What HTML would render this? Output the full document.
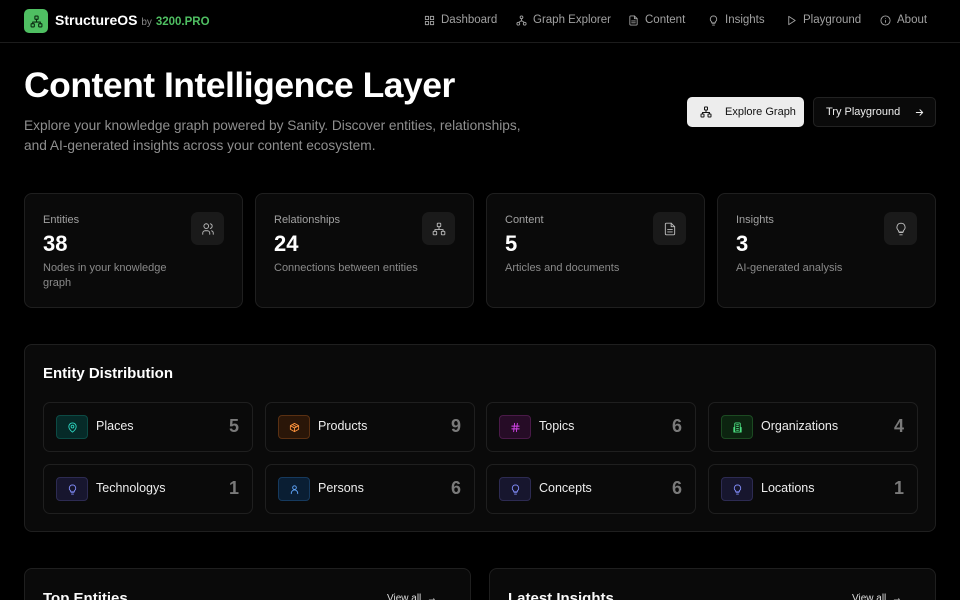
<!DOCTYPE html>
<html><head><meta charset="utf-8"><style>
*{box-sizing:border-box;margin:0;padding:0}
html,body{width:960px;height:600px;overflow:hidden}
body{background:#000;color:#fafafa;font-family:"Liberation Sans",sans-serif;position:relative}
.abs{position:absolute}
svg{fill:none;stroke:currentColor;stroke-width:2;stroke-linecap:round;stroke-linejoin:round}
.nav{position:absolute;top:0;left:0;width:960px;height:43px;border-bottom:1px solid #1c1c1c}
.nl{position:absolute;top:14px;font-size:11.5px;color:#a1a1a1;display:flex;align-items:center;gap:6px}
.nl svg{width:11px;height:11px}
.card{position:absolute;border:1px solid #1f1f1f;border-radius:8px;background:#0a0a0a}
.sc .lab{position:absolute;left:18px;top:20px;font-size:11px;color:#a1a1a1}
.sc .num{position:absolute;left:18px;top:37px;font-size:22px;font-weight:bold;color:#fff}
.sc .desc{position:absolute;left:18px;top:67px;font-size:11px;color:#8a8a8a;line-height:15px;width:150px}
.sc .ic{position:absolute;right:18px;top:18px;width:33px;height:33px;border-radius:7px;background:#1a1a1a;color:#bbb;display:flex;align-items:center;justify-content:center}
.sc .ic svg{width:14px;height:14px;stroke-width:1.6}
.it{position:absolute;width:210px;height:50px;border:1px solid #1f1f1f;border-radius:7px;background:#0a0a0a}
.it .b{position:absolute;left:12px;top:12px;width:32px;height:24px;border-radius:4px;display:flex;align-items:center;justify-content:center;border:1px solid}
.it .b svg{width:11px;height:11px}
.it .t{position:absolute;left:52px;top:16px;font-size:12.5px;color:#ededed}
.it .n{position:absolute;right:13px;top:13px;font-size:18px;color:#7a7a7a;font-weight:bold}
</style></head><body>
<div class="nav">
<div class="abs" style="left:24px;top:9px;width:24px;height:24px;border-radius:5px;background:#4fbf62;color:#0a2a10;display:flex;align-items:center;justify-content:center"><svg width="13" height="13" viewBox="0 0 24 24"><rect x="9" y="2" width="6" height="6" rx="1"/><rect x="2" y="16" width="6" height="6" rx="1"/><rect x="16" y="16" width="6" height="6" rx="1"/><path d="M5 16v-3h14v3M12 8v5"/></svg></div>
<div class="abs" style="left:55px;top:12px;font-size:14px;font-weight:bold;color:#fff">StructureOS <span style="font-size:10px;font-weight:normal;color:#888">by</span> <span style="font-size:11.5px;color:#4fbf62">3200.PRO</span></div>
<div class="nl" style="left:424px"><svg viewBox="0 0 24 24"><rect x="3" y="3" width="7" height="7"/><rect x="14" y="3" width="7" height="7"/><rect x="3" y="14" width="7" height="7"/><rect x="14" y="14" width="7" height="7"/></svg>Dashboard</div>
<div class="nl" style="left:516px"><svg viewBox="0 0 24 24"><circle cx="12" cy="5" r="3"/><circle cx="5" cy="19" r="3"/><circle cx="19" cy="19" r="3"/><path d="M12 8v4M6 16l6-4 6 4"/></svg>Graph Explorer</div>
<div class="nl" style="left:628px"><svg viewBox="0 0 24 24"><path d="M14 2H6a2 2 0 0 0-2 2v16a2 2 0 0 0 2 2h12a2 2 0 0 0 2-2V8z"/><path d="M14 2v6h6M8 13h8M8 17h8"/></svg>Content</div>
<div class="nl" style="left:708px"><svg viewBox="0 0 24 24"><path d="M9 18h6M10 22h4M12 2a7 7 0 0 0-4 12.7V17h8v-2.3A7 7 0 0 0 12 2z"/></svg>Insights</div>
<div class="nl" style="left:786px"><svg viewBox="0 0 24 24"><path d="M6 3l14 9-14 9z"/></svg>Playground</div>
<div class="nl" style="left:880px"><svg viewBox="0 0 24 24"><circle cx="12" cy="12" r="10"/><path d="M12 16v-4M12 8h0"/></svg>About</div>
</div>
<div class="abs" style="left:24px;top:65px;font-size:35.5px;font-weight:bold;color:#fff;letter-spacing:-0.5px">Content Intelligence Layer</div>
<div class="abs" style="left:24px;top:116px;font-size:13.7px;color:#8f8f8f;line-height:20px;width:520px">Explore your knowledge graph powered by Sanity. Discover entities, relationships, and AI-generated insights across your content ecosystem.</div>
<div class="abs" style="left:687px;top:97px;width:117px;height:30px;border-radius:5px;background:#ededed;color:#111;font-size:11px;display:flex;align-items:center;padding-left:13px;gap:13px"><svg width="12" height="12" viewBox="0 0 24 24"><rect x="9" y="2" width="6" height="6" rx="1"/><rect x="2" y="16" width="6" height="6" rx="1"/><rect x="16" y="16" width="6" height="6" rx="1"/><path d="M5 16v-3h14v3M12 8v5"/></svg>Explore Graph</div>
<div class="abs" style="left:813px;top:97px;width:123px;height:30px;border-radius:5px;border:1px solid #222;background:#0a0a0a;color:#eee;font-size:11px;display:flex;align-items:center;padding-left:12px;gap:14px">Try Playground <svg width="11" height="11" viewBox="0 0 24 24"><path d="M5 12h14M13 6l6 6-6 6"/></svg></div>

<div class="card sc" style="left:24px;top:193px;width:219px;height:115px"><div class="lab">Entities</div><div class="num">38</div><div class="desc">Nodes in your knowledge graph</div><div class="ic"><svg viewBox="0 0 24 24"><circle cx="9" cy="7" r="4"/><path d="M3 21v-2a4 4 0 0 1 4-4h4a4 4 0 0 1 4 4v2M16 3.1a4 4 0 0 1 0 7.8M21 21v-2a4 4 0 0 0-3-3.9"/></svg></div></div>
<div class="card sc" style="left:255px;top:193px;width:219px;height:115px"><div class="lab">Relationships</div><div class="num">24</div><div class="desc" style="width:200px">Connections between entities</div><div class="ic"><svg viewBox="0 0 24 24"><rect x="9" y="2" width="6" height="6" rx="1"/><rect x="2" y="16" width="6" height="6" rx="1"/><rect x="16" y="16" width="6" height="6" rx="1"/><path d="M5 16v-3h14v3M12 8v5"/></svg></div></div>
<div class="card sc" style="left:486px;top:193px;width:219px;height:115px"><div class="lab">Content</div><div class="num">5</div><div class="desc">Articles and documents</div><div class="ic"><svg viewBox="0 0 24 24"><path d="M14 2H6a2 2 0 0 0-2 2v16a2 2 0 0 0 2 2h12a2 2 0 0 0 2-2V8z"/><path d="M14 2v6h6M8 13h8M8 17h8"/></svg></div></div>
<div class="card sc" style="left:717px;top:193px;width:219px;height:115px"><div class="lab">Insights</div><div class="num">3</div><div class="desc">AI-generated analysis</div><div class="ic"><svg viewBox="0 0 24 24"><path d="M9 18h6M10 22h4M12 2a7 7 0 0 0-4 12.7V17h8v-2.3A7 7 0 0 0 12 2z"/></svg></div></div>

<div class="card" style="left:24px;top:344px;width:912px;height:188px">
<div class="abs" style="left:18px;top:20px;font-size:15px;font-weight:bold;color:#fff">Entity Distribution</div>
</div>
<div class="it" style="left:43px;top:402px"><div class="b" style="background:#062a28;border-color:#0c4a44;color:#2dd4bf"><svg viewBox="0 0 24 24"><path d="M20 10c0 6-8 12-8 12S4 16 4 10a8 8 0 0 1 16 0z"/><circle cx="12" cy="10" r="3"/></svg></div><div class="t">Places</div><div class="n">5</div></div>
<div class="it" style="left:265px;top:402px"><div class="b" style="background:#2a1608;border-color:#5a3012;color:#fb923c"><svg viewBox="0 0 24 24"><path d="M21 8l-9-5-9 5v8l9 5 9-5zM3 8l9 5 9-5M12 13v8M7.5 5.5l9 5"/></svg></div><div class="t">Products</div><div class="n">9</div></div>
<div class="it" style="left:486px;top:402px"><div class="b" style="background:#260c26;border-color:#4a1a48;color:#d946ef"><svg viewBox="0 0 24 24"><path d="M4 9h16M4 15h16M10 3L8 21M16 3l-2 18"/></svg></div><div class="t">Topics</div><div class="n">6</div></div>
<div class="it" style="left:708px;top:402px"><div class="b" style="background:#0c2410;border-color:#1c4a22;color:#4ade80"><svg viewBox="0 0 24 24"><path d="M6 22V4a2 2 0 0 1 2-2h8a2 2 0 0 1 2 2v18zM6 12H4v10h16V12h-2M10 6h4M10 10h4M10 14h4M10 18h4"/></svg></div><div class="t">Organizations</div><div class="n">4</div></div>
<div class="it" style="left:43px;top:464px"><div class="b" style="background:#17162e;border-color:#2d2b52;color:#818cf8"><svg viewBox="0 0 24 24"><path d="M9 18h6M10 22h4M12 2a7 7 0 0 0-4 12.7V17h8v-2.3A7 7 0 0 0 12 2z"/></svg></div><div class="t">Technologys</div><div class="n">1</div></div>
<div class="it" style="left:265px;top:464px"><div class="b" style="background:#0a1e33;border-color:#163a5e;color:#60a5fa"><svg viewBox="0 0 24 24"><circle cx="12" cy="8" r="4"/><path d="M5 21v-1a7 7 0 0 1 14 0v1"/></svg></div><div class="t">Persons</div><div class="n">6</div></div>
<div class="it" style="left:486px;top:464px"><div class="b" style="background:#17162e;border-color:#2d2b52;color:#818cf8"><svg viewBox="0 0 24 24"><path d="M9 18h6M10 22h4M12 2a7 7 0 0 0-4 12.7V17h8v-2.3A7 7 0 0 0 12 2z"/></svg></div><div class="t">Concepts</div><div class="n">6</div></div>
<div class="it" style="left:708px;top:464px"><div class="b" style="background:#17162e;border-color:#2d2b52;color:#818cf8"><svg viewBox="0 0 24 24"><path d="M9 18h6M10 22h4M12 2a7 7 0 0 0-4 12.7V17h8v-2.3A7 7 0 0 0 12 2z"/></svg></div><div class="t">Locations</div><div class="n">1</div></div>

<div class="card" style="left:24px;top:568px;width:447px;height:60px"><div class="abs" style="left:18px;top:21px;font-size:15px;font-weight:bold">Top Entities</div><div class="abs" style="left:362px;top:24px;font-size:10px;color:#ddd">View all &nbsp;→</div></div>
<div class="card" style="left:489px;top:568px;width:447px;height:60px"><div class="abs" style="left:18px;top:21px;font-size:15px;font-weight:bold">Latest Insights</div><div class="abs" style="left:362px;top:24px;font-size:10px;color:#ddd">View all &nbsp;→</div></div>
</body></html>
